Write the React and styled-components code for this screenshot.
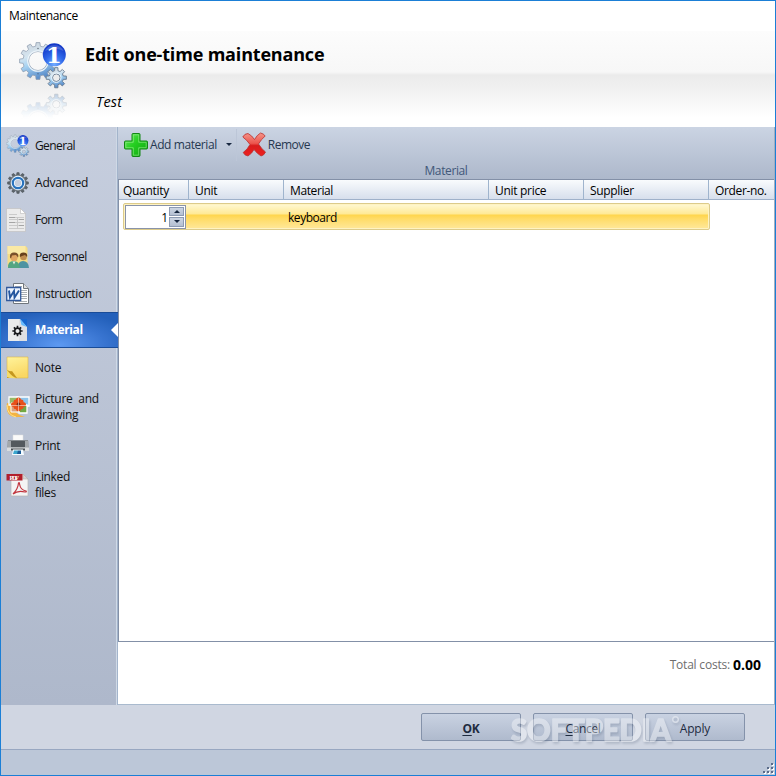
import React from "react";
import styled, { createGlobalStyle, css } from "styled-components";

const GlobalStyle = createGlobalStyle`
  body {
    margin: 0;
    font-family: "Open Sans", "Noto Sans", sans-serif;
    font-size: 12px;
    color: #111;
  }
  * {
    box-sizing: border-box;
  }
  svg {
    display: block;
    flex: none;
  }
`;

const Window = styled.div`
  width: 776px;
  height: 776px;
  border: 1px solid #1b7fd6;
  display: flex;
  flex-direction: column;
  overflow: hidden;
  background: #fff;
`;

const Label = styled.span`
  white-space: pre;
  letter-spacing: ${({ $ls }) => $ls || 0}px;
`;

const TitleBar = styled.div`
  height: 30px;
  padding: 0 0 1px 8px;
  display: flex;
  align-items: center;
  color: #000;
`;

const Banner = styled.div`
  height: 96px;
  display: flex;
  padding: 10px 0 0 18px;
  background: linear-gradient(
    #fcfcfc 0,
    #f7f7f7 41px,
    #ebebeb 44px,
    #f0f0f0 56px,
    #ffffff 86px
  );
`;

const BannerIcon = styled.div`
  width: 50px;
  height: 78px;
`;

const Reflection = styled.div`
  height: 28px;
  overflow: hidden;
  opacity: 0.4;
  mask-image: linear-gradient(#000, transparent);
  svg {
    transform: scaleY(-1);
  }
`;

const BannerText = styled.div`
  display: flex;
  flex-direction: column;
  padding-left: 16px;
`;

const Heading = styled.h1`
  margin: 0;
  height: 27px;
  line-height: 27px;
  font-size: 18px;
  font-weight: 700;
  letter-spacing: -0.18px;
  color: #000;
`;

const SubHeading = styled.div`
  margin-top: 21px;
  padding-left: 11px;
  line-height: 25px;
  font-size: 14.5px;
  font-style: italic;
  letter-spacing: 0.2px;
  color: #000;
`;

const Body = styled.div`
  height: 578px;
  display: flex;
`;

const Sidebar = styled.nav`
  width: 117px;
  border-right: 1px solid #a3b4cb;
  box-shadow: inset -1px 0 #cfd9e6;
  background: linear-gradient(#c6cede, #aeb8cb);
`;

const NavItem = styled.div`
  position: relative;
  height: ${({ $tall }) => ($tall ? 41 : 37)}px;
  padding-left: 5px;
  display: flex;
  align-items: center;
  gap: 5px;
  line-height: 16px;
  ${({ $active }) =>
    $active &&
    css`
      height: 36px;
      margin: 0 -1px 1px 0;
      border: solid #194c98;
      border-width: 1px 0;
      color: #fff;
      font-weight: 700;
      background: radial-gradient(
        ellipse 78px 34px at 58px 32px,
        #5d99f1,
        #3874d0 60%,
        #2360ba 100%
      );
    `}
`;

const ActiveArrow = styled.span`
  position: absolute;
  right: 0;
  top: 10px;
  border: solid transparent;
  border-width: 7px 7px 7px 0;
  border-right-color: #fff;
`;

const Content = styled.main`
  flex: 1;
  min-width: 0;
  display: flex;
  flex-direction: column;
  border-right: 1px solid #a3aec0;
  border-bottom: 1px solid #a9bace;
`;

const Ribbon = styled.div`
  height: 52px;
  display: flex;
  flex-direction: column;
  background: linear-gradient(#cbd4e3, #adb8cb);
`;

const RibbonTools = styled.div`
  height: 35px;
  padding-left: 5px;
  display: flex;
  align-items: center;
  color: #263850;
`;

const RibbonButton = styled.button`
  border: 0;
  padding: 0;
  background: none;
  font: inherit;
  color: inherit;
  display: flex;
  align-items: center;
  gap: ${({ $gap }) => $gap || 0}px;
`;

const Caret = styled.span`
  margin-left: 8px;
  border: solid transparent;
  border-width: 3px 3px 0;
  border-top-color: #17273f;
`;

const ToolSeparator = styled.span`
  width: 1px;
  height: 32px;
  margin: 0 5px 0 4px;
  background: #bcc6d7;
`;

const GroupCaption = styled.div`
  height: 17px;
  line-height: 17px;
  text-align: center;
  color: #415779;
`;

const Grid = styled.div`
  height: 463px;
  border: 1px solid #8390a7;
  border-right-width: 0;
  background: #fff;
`;

const columns = "70px 95px 205px 95px 125px 1fr";

const HeaderRow = styled.div`
  display: grid;
  grid-template-columns: ${columns};
  height: 20px;
  border-bottom: 1px solid #9fb1ca;
  background: linear-gradient(#f9fbfd, #d7dfec);
`;

const HeaderCell = styled.div`
  padding: 2px 0 0 ${({ $first }) => ($first ? 4 : 6)}px;
  line-height: 18px;
  border-right: 1px solid #9fb4cd;
  color: #000;
  white-space: nowrap;
  &:last-child {
    border-right: 0;
  }
`;

const DataRow = styled.div`
  width: 587px;
  height: 27px;
  margin: 3px 0 0 4px;
  border: 1px solid #dccb8b;
  border-radius: 2px;
  box-shadow: inset 0 0 0 1px #fff3c2;
  display: flex;
  align-items: center;
  color: #000;
  background: linear-gradient(
    #fff8d4 0,
    #ffe995 10px,
    #ffd54c 11px,
    #ffdc68 15px,
    #ffe89b 100%
  );
`;

const QuantityEditor = styled.div`
  width: 61px;
  height: 24px;
  margin-left: 1px;
  border: 1px solid #8993a9;
  display: flex;
  background: #fff;
`;

const QuantityValue = styled.span`
  flex: 1;
  line-height: 24px;
  text-align: right;
  padding-right: 1px;
`;

const Spinner = styled.div`
  display: flex;
  flex-direction: column;
  gap: 1px;
  padding: 1px 1px 1px 0;
`;

const SpinButton = styled.span`
  flex: 1;
  width: 15px;
  border: 1px solid #8d9bb2;
  display: flex;
  align-items: center;
  justify-content: center;
  background: linear-gradient(#ccd5e3, #b5c0d2);
  &::after {
    content: "";
    border: solid transparent;
    border-width: ${({ $up }) => ($up ? "0 3px 3px" : "3px 3px 0")};
    ${({ $up }) => ($up ? "border-bottom-color" : "border-top-color")}: #16263f;
  }
`;

const MaterialCell = styled.span`
  margin-left: 102px;
  padding-top: 2px;
`;

const Totals = styled.div`
  flex: 1;
  display: flex;
  justify-content: flex-end;
  padding: 13px 13px 0 0;
  gap: 3px;
  line-height: 20px;
  color: #6e6e6e;
  b {
    color: #000;
    font-size: 14px;
  }
`;

const Footer = styled.footer`
  position: relative;
  height: 45px;
  padding: 8px 30px 0 0;
  display: flex;
  justify-content: flex-end;
  gap: 12px;
  background: #d0d6e2;
  border-bottom: 1px solid #98a7c1;
`;

const DialogButton = styled.button`
  width: 100px;
  height: 28px;
  padding: 2px 0 0;
  border: 1px solid #8492aa;
  border-radius: 2px;
  font: inherit;
  font-weight: ${({ $bold }) => ($bold ? 700 : 400)};
  color: #1e2b3f;
  background: linear-gradient(#c9d2e2, #afbacd);
  u {
    text-underline-offset: 2px;
  }
`;

const Watermark = styled.svg`
  position: absolute;
  left: 505px;
  top: 3px;
  pointer-events: none;
  opacity: 0.38;
  filter: drop-shadow(1px 2px 1px rgba(70, 85, 110, 0.6));
`;

const StatusBar = styled.div`
  flex: 1;
  display: flex;
  align-items: flex-end;
  justify-content: flex-end;
  padding: 0 1px 1px 0;
  background: #bcc7d8;
`;

// outline of a cog with n square teeth
const cog = (cx, cy, outer, inner, n) => {
  const pts = [];
  const step = (Math.PI * 2) / n;
  for (let i = 0; i < n; i++) {
    [
      [-0.3, inner],
      [-0.2, outer],
      [0.2, outer],
      [0.3, inner],
    ].forEach(([o, r]) => {
      const a = (i + o) * step - Math.PI / 2;
      pts.push(
        `${(cx + r * Math.cos(a)).toFixed(2)} ${(cy + r * Math.sin(a)).toFixed(2)}`
      );
    });
  }
  return `M${pts.join("L")}Z`;
};

const ring = (cx, cy, r) =>
  `M${cx - r} ${cy}a${r} ${r} 0 1 0 ${r * 2} 0a${r} ${r} 0 1 0 ${-r * 2} 0Z`;

const GearsIcon = ({ size, id, badge = true }) => (
  <svg width={size} height={size} viewBox="0 0 50 50">
    <defs>
      <linearGradient id={`${id}g`} x1="0" y1="0" x2="0.35" y2="1">
        <stop offset="0" stopColor="#c9d0d8" />
        <stop offset="0.4" stopColor="#d5e5f0" />
        <stop offset="0.62" stopColor="#a9d4f2" />
        <stop offset="1" stopColor="#5d91cd" />
      </linearGradient>
      <radialGradient id={`${id}b`} cx="0.5" cy="0.9" r="0.8">
        <stop offset="0" stopColor="#73acff" />
        <stop offset="0.5" stopColor="#2f68ea" />
        <stop offset="1" stopColor="#1238c8" />
      </radialGradient>
    </defs>
    <path
      d={cog(19, 20, 18.5, 15, 12) + ring(19, 20, 9.5)}
      fill={`url(#${id}g)`}
      fillRule="evenodd"
      stroke="#8998ac"
      strokeWidth="0.7"
    />
    <circle cx="19" cy="20" r="10.3" fill="none" stroke="#edf5fa" strokeWidth="1.1" />
    <circle cx="19" cy="7.5" r="0.8" fill="#6c7785" />
    <circle cx="19" cy="32.8" r="0.8" fill="#536f91" />
    <path
      d={cog(37.3, 36.7, 10.2, 7.2, 8) + ring(37.3, 36.7, 3.8)}
      fill={`url(#${id}g)`}
      fillRule="evenodd"
      stroke="#66798f"
      strokeWidth="0.9"
    />
    <circle cx="37.3" cy="36.7" r="4.7" fill="none" stroke="#eff7fc" />
    {badge && (
      <>
        <circle cx="35.3" cy="13.8" r="11.5" fill={`url(#${id}b)`} />
        <path d="M26 10a10 9 0 0 1 18.6 0q-9-5-18.6 0Z" fill="#fff" opacity="0.2" />
        <text
          x="34.8"
          y="22"
          textAnchor="middle"
          fontFamily="DejaVu Serif"
          fontWeight="700"
          fontSize="22.5"
          fill="#fff"
        >
          1
        </text>
      </>
    )}
  </svg>
);

const AdvancedIcon = () => (
  <svg width="24" height="24" viewBox="0 0 24 24">
    <path d={cog(12, 12, 10.4, 8.2, 12)} fill="#5d656d" stroke="#4d5459" strokeWidth="0.7" />
    <circle cx="12" cy="12" r="8" fill="#7e868d" />
    <circle cx="12" cy="12" r="5.2" fill="#c4cddc" stroke="#eef7ff" strokeWidth="4" />
    <circle cx="12" cy="12" r="5.2" fill="none" stroke="#2872bd" strokeWidth="2.2" />
  </svg>
);

const FormIcon = () => (
  <svg width="24" height="24" viewBox="0 0 24 24">
    <path d="M.5.5h14l5 5v18H.5Z" fill="#ebebeb" stroke="#c1c1c1" strokeWidth="0.7" />
    <path d="M14.500 .5v5h5Z" fill="#fff" stroke="#bbb" strokeWidth="0.6" />
    <path
      d="M3 6.500h8M3 9.500h15M3 11.500h15M3 14.500h15M3 17.500h15M3 20.500h15M11.500 9v12"
      stroke="#c6c6c6"
      strokeWidth="0.9"
    />
    <path d="M3 9.500h6M3 14.500h6M13 11.500h5M13 17.500h5" stroke="#a5a5a5" />
  </svg>
);

const PersonnelIcon = () => (
  <svg width="24" height="24" viewBox="0 0 24 24">
    <path d="M1.500 1h18l2 2v19h-20Z" fill="#f5dc83" />
    <path d="M1.500 1h18v8h-18Z" fill="#fae9a5" />
    <path d="M12.500 23q-1-7 4.500-7t6 7Z" fill="#4e93a2" />
    <circle cx="17.500" cy="12" r="3.300" fill="#c08d50" />
    <path d="M14 12q-1-4.500 3.500-4.500T21 12l-2-2-3 1Z" fill="#68401c" />
    <path d="M2 23q-.5-7 5.500-7t6.500 7Z" fill="#53a582" />
    <circle cx="8" cy="12.500" r="3.600" fill="#e0a562" />
    <path d="M4 12.500q-.5-5.500 4.500-5t3.500 5l-2-2.500-4 .5-1 3Z" fill="#79502a" />
    <path d="M6.500 16.500l1.500 3 1.500-3Z" fill="#e8ede3" />
  </svg>
);

const InstructionIcon = () => (
  <svg width="24" height="24" viewBox="0 0 24 24">
    <path d="M7.500 1.500h10l5 5v15h-15Z" fill="#fff" stroke="#70767d" />
    <path d="M17.500 1.500v5h5" fill="#ddd" stroke="#70767d" />
    <path
      d="M9 4.500h7M15 8.500h6M15 10.500h6M15 12.500h6M15 14.500h6M15 16.500h6M9 19.500h12"
      stroke="#a8adb1"
    />
    <path d="M.7 5.500h14v13H.7Z" fill="#edf4ff" stroke="#31599c" strokeWidth="1.300" />
    <path
      d="M3 8.500l1 7 4-6.500 .5 6.500 4.500-7"
      fill="none"
      stroke="#24569f"
      strokeWidth="1.900"
    />
  </svg>
);

const MaterialIcon = () => (
  <svg width="24" height="24" viewBox="0 0 24 24">
    <path d="M2 1h13l6 6v16H2Z" fill="#dedfe2" />
    <path d="M2 1h11v22H2Z" fill="#eeeff1" opacity="0.7" />
    <path d="M14 1h7v8Z" fill="#1766ce" />
    <path d="M14 1l1.500 6L21 9Z" fill="#62baff" />
    <path
      d={cog(11.5, 13, 5.2, 3.7, 8) + ring(11.5, 13, 2)}
      fillRule="evenodd"
      fill="#15171b"
    />
  </svg>
);

const NoteIcon = () => (
  <svg width="24" height="24" viewBox="0 0 24 24">
    <defs>
      <linearGradient id="note" x1="0" y1="0" x2="0.3" y2="1">
        <stop offset="0" stopColor="#fff39b" />
        <stop offset="1" stopColor="#fad763" />
      </linearGradient>
    </defs>
    <path d="M1 1h21v21H10Q5 21 1 14Z" fill="url(#note)" stroke="#dcb64b" strokeWidth="0.6" />
    <path d="M1 14q4 2 5 1l5 7H1Z" fill="#c5971e" />
    <path d="M1 14q6 8 10 8-6 1-10-1Z" fill="#f6db68" />
  </svg>
);

const PictureIcon = () => (
  <svg width="24" height="24" viewBox="0 0 24 24">
    <path d="M1 8q-2 12 7 14h11q-11-2-12-13Z" fill="#f3b342" />
    <path d="M1 10q0 10 9 12" fill="none" stroke="#ffe48a" />
    <path d="M11 2h12v9H11Z" fill="#8dc3ea" stroke="#fff" strokeWidth="1.300" />
    <path d="M3 2h9v8H3Z" fill="#96ba68" stroke="#fff" strokeWidth="1.300" />
    <path d="M5 8h9v9H5Z" fill="#d9a07c" stroke="#fff" />
    <path d="M13 10h8v8h-8Z" fill="#71a845" stroke="#fff" strokeWidth="1.300" />
    <g fill="#e8501a">
      <ellipse cx="12.500" cy="5.800" rx="2.600" ry="3.300" />
      <ellipse cx="12.500" cy="13" rx="2.600" ry="3.300" />
      <ellipse cx="8.500" cy="9.400" rx="3.500" ry="2.500" />
      <ellipse cx="16.500" cy="9.400" rx="3.500" ry="2.500" />
      <circle cx="9.800" cy="6.800" r="2.300" />
      <circle cx="15.300" cy="6.800" r="2.300" />
      <circle cx="9.800" cy="12" r="2.300" />
      <circle cx="15.300" cy="12" r="2.300" />
    </g>
    <circle cx="12.500" cy="9.500" r="1.900" fill="#832d13" />
    <path d="M12.500 3v14M5 10.500h16" stroke="#fff" strokeWidth="0.700" opacity="0.700" />
  </svg>
);

const PrintIcon = () => (
  <svg width="24" height="24" viewBox="0 0 24 24">
    <path d="M7 1h10v9H7Z" fill="#fafafa" stroke="#ddd" strokeWidth="0.5" />
    <path d="M2 6h20l1 11H1Z" fill="#858b90" />
    <path d="M1.500 7h4v8h-4ZM18.500 7h4v8h-4Z" fill="#a3a8ac" />
    <path d="M5 7h14v6H5Z" fill="#53595e" />
    <path d="M1 13.500h22v3.500H1Z" fill="#dadddf" />
    <path d="M5 14.500h14v2H5Z" fill="#4b5054" />
    <path d="M7 15.500h10l1 5.500H6Z" fill="#f4fbff" />
    <path d="M8 16.500h4v3.500H7Z" fill="#3aa5cd" />
    <path d="M12 16.500h3v3.500h-4Z" fill="#195a96" />
  </svg>
);

const PdfIcon = () => (
  <svg width="24" height="24" viewBox="0 0 24 24">
    <path d="M5 1h12l5 5v17H5Z" fill="#f4f4f4" stroke="#b4b4b4" strokeWidth="0.700" />
    <path d="M17 1v5h5Z" fill="#d5d5d5" stroke="#aaa" strokeWidth="0.500" />
    <path d="M.5 1h16v6.500H.5Z" fill="#b21f2b" />
    <text
      x="3.500"
      y="6.500"
      fontFamily="Liberation Serif"
      fontSize="6.500"
      fontWeight="700"
      fill="#fff"
      textLength="9.500"
    >
      PDF
    </text>
    <path
      d="M7 21q5-5 5.500-11 1-1 1 1 1 6 6.500 7 1 1-1 1-7-2-12 2"
      fill="none"
      stroke="#c1343d"
      strokeWidth="1.200"
    />
  </svg>
);

const PlusIcon = () => (
  <svg width="26" height="26" viewBox="0 0 26 26">
    <defs>
      <linearGradient id="plus" x1="0" y1="0" x2="1" y2="1">
        <stop offset="0" stopColor="#69e862" />
        <stop offset="0.45" stopColor="#25ce20" />
        <stop offset="1" stopColor="#10a313" />
      </linearGradient>
    </defs>
    <path
      d="M10 1.500h6q1 0 1 1V9h6.500q1 0 1 1v6q0 1-1 1H17v6.500q0 1-1 1h-6q-1 0-1-1V17H2.500q-1 0-1-1v-6q0-1 1-1H9V2.500q0-1 1-1Z"
      fill="url(#plus)"
      stroke="#138615"
    />
    <path
      d="M10.300 15.700H2.800V10.300h7.500V2.800h5.400v7.500h7.500v5.400h-7.500v7.500h-5.400Z"
      fill="none"
      stroke="#a2f196"
      strokeWidth="0.800"
      opacity="0.700"
    />
  </svg>
);

const CrossIcon = () => (
  <svg width="24" height="25" viewBox="0 0 24 25">
    <defs>
      <linearGradient id="cross" x1="0" y1="0" x2="0" y2="1">
        <stop offset="0" stopColor="#f5958a" />
        <stop offset="0.45" stopColor="#ec554d" />
        <stop offset="0.55" stopColor="#d81c1c" />
        <stop offset="1" stopColor="#ee2020" />
      </linearGradient>
    </defs>
    <path
      d="M.8 5Q2.500 1.500 6 1.500q4 2 6.500 6Q15 3 18.500 1q3 .5 4.700 3Q19 7.500 16.500 12q3 5 7 8-1.500 3.500-4.500 4-4-2.500-7-6.500Q10 21.500 6 24q-3.500-.5-4.800-3.500Q5.500 17.500 8 12.500 5 8 .8 5Z"
      fill="url(#cross)"
      stroke="#b9302f"
      strokeWidth="0.8"
      strokeLinejoin="round"
    />
  </svg>
);

const Grip = () => (
  <svg width="12" height="12" viewBox="0 0 12 12">
    {[
      [9, 1],
      [5, 5],
      [9, 5],
      [1, 9],
      [5, 9],
      [9, 9],
    ].map(([x, y]) => (
      <g key={`${x}-${y}`}>
        <rect x={x + 1} y={y + 1} width="2" height="2" fill="#fff" />
        <rect x={x} y={y} width="2" height="2" fill="#5a6c8a" />
      </g>
    ))}
  </svg>
);

const navItems = [
  { label: "General", icon: <GearsIcon size={24} id="nav" />, ls: -0.6 },
  { label: "Advanced", icon: <AdvancedIcon />, ls: -0.2 },
  { label: "Form", icon: <FormIcon />, ls: -0.55 },
  { label: "Personnel", icon: <PersonnelIcon />, ls: -0.5 },
  { label: "Instruction", icon: <InstructionIcon />, ls: -0.34 },
  { label: "Material", icon: <MaterialIcon />, ls: -0.4, active: true },
  { label: "Note", icon: <NoteIcon />, ls: -0.25 },
  { label: "Picture  and\ndrawing", icon: <PictureIcon />, ls: -0.25, tall: true },
  { label: "Print", icon: <PrintIcon />, ls: -0.3 },
  { label: "Linked\nfiles", icon: <PdfIcon />, ls: -0.35, tall: true },
];

const headers = [
  { label: "Quantity", ls: -0.3 },
  { label: "Unit", ls: -0.3 },
  { label: "Material", ls: -0.4 },
  { label: "Unit price", ls: -0.3 },
  { label: "Supplier", ls: -0.32 },
  { label: "Order-no.", ls: -0.35 },
];

const App = () => {
  return (
    <>
      <GlobalStyle />
      <Window>
        <TitleBar>
          <Label $ls={-0.35}>Maintenance</Label>
        </TitleBar>
        <Banner>
          <BannerIcon>
            <GearsIcon size={50} id="top" />
            <Reflection>
              <GearsIcon size={50} id="mirror" badge={false} />
            </Reflection>
          </BannerIcon>
          <BannerText>
            <Heading>Edit one-time maintenance</Heading>
            <SubHeading>Test</SubHeading>
          </BannerText>
        </Banner>
        <Body>
          <Sidebar>
            {navItems.map(({ label, icon, ls, active, tall }) => (
              <NavItem key={label} $active={active} $tall={tall}>
                {icon}
                <Label $ls={ls}>{label}</Label>
                {active && <ActiveArrow />}
              </NavItem>
            ))}
          </Sidebar>
          <Content>
            <Ribbon>
              <RibbonTools>
                <RibbonButton $gap={1}>
                  <PlusIcon />
                  <Label $ls={-0.42}>Add material</Label>
                  <Caret />
                </RibbonButton>
                <ToolSeparator />
                <RibbonButton $gap={2}>
                  <CrossIcon />
                  <Label $ls={-0.5}>Remove</Label>
                </RibbonButton>
              </RibbonTools>
              <GroupCaption>
                <Label $ls={-0.38}>Material</Label>
              </GroupCaption>
            </Ribbon>
            <Grid>
              <HeaderRow>
                {headers.map(({ label, ls }, i) => (
                  <HeaderCell key={label} $first={i === 0}>
                    <Label $ls={ls}>{label}</Label>
                  </HeaderCell>
                ))}
              </HeaderRow>
              <DataRow>
                <QuantityEditor>
                  <QuantityValue>1</QuantityValue>
                  <Spinner>
                    <SpinButton $up />
                    <SpinButton />
                  </Spinner>
                </QuantityEditor>
                <MaterialCell>
                  <Label $ls={-0.45}>keyboard</Label>
                </MaterialCell>
              </DataRow>
            </Grid>
            <Totals>
              <Label $ls={-0.2}>Total costs:</Label>
              <b>0.00</b>
            </Totals>
          </Content>
        </Body>
        <Footer>
          <DialogButton $bold>
            <Label $ls={-0.2}>
              <u>O</u>K
            </Label>
          </DialogButton>
          <DialogButton>
            <Label $ls={-0.35}>
              <u>C</u>ancel
            </Label>
          </DialogButton>
          <DialogButton>
            <Label $ls={-0.2}>Apply</Label>
          </DialogButton>
          <Watermark width="190" height="38" viewBox="0 0 190 38">
            <text
              x="5"
              y="33"
              textLength="160"
              lengthAdjust="spacingAndGlyphs"
              fontFamily="Lato"
              fontWeight="900"
              fontSize="31"
              fill="#fff"
              stroke="#fff"
              strokeWidth="1.6"
              strokeLinejoin="round"
            >
              SOFTPEDIA
            </text>
            <circle cx="169.500" cy="11.500" r="2.800" fill="none" stroke="#fff" strokeWidth="1.400" />
          </Watermark>
        </Footer>
        <StatusBar>
          <Grip />
        </StatusBar>
      </Window>
    </>
  );
};

export default App;
